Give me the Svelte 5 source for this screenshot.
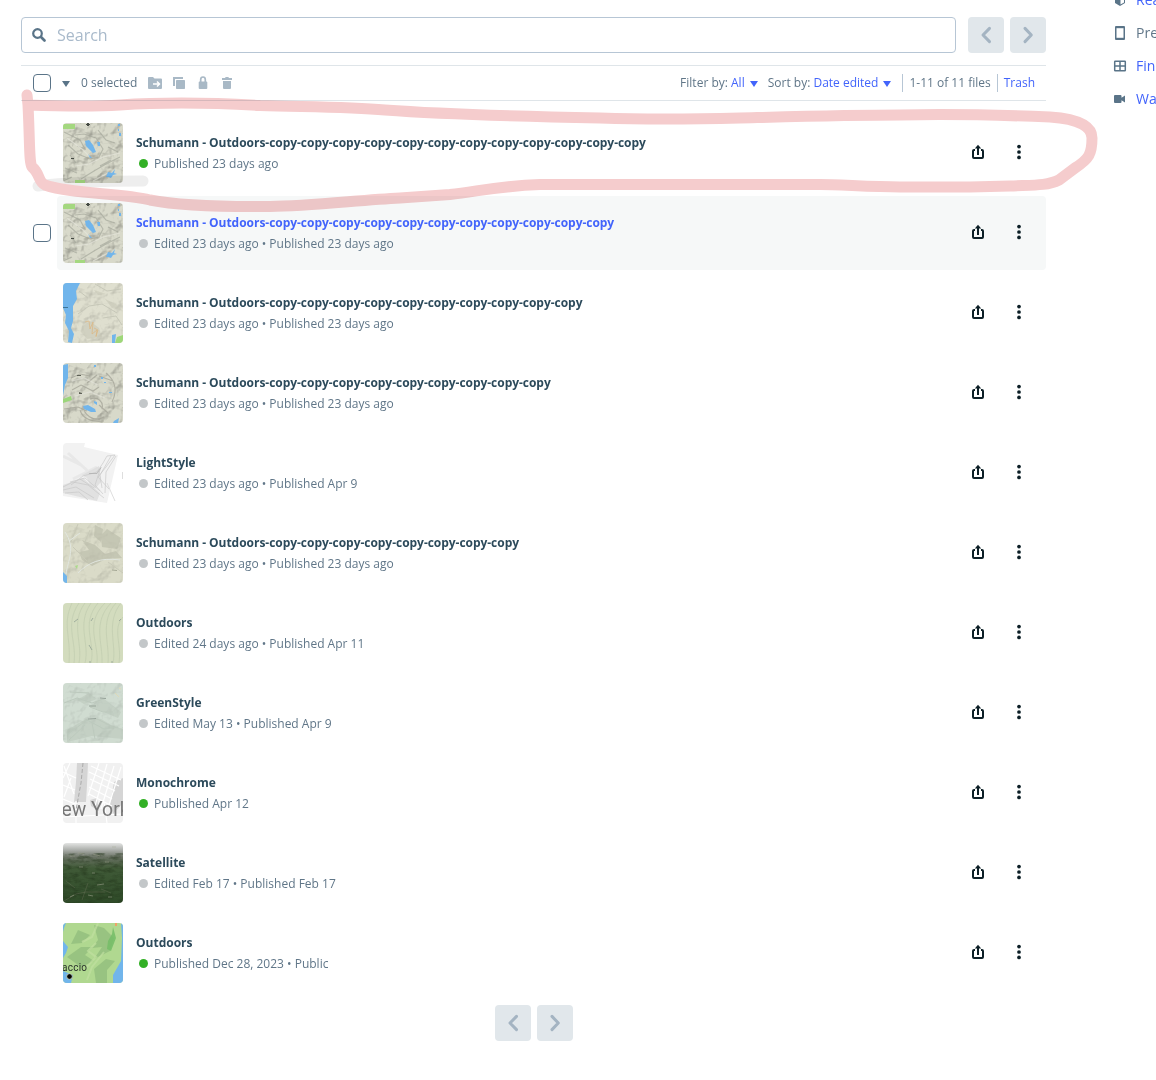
<script>
  const copies = (n) => 'Schumann - Outdoors' + '-copy'.repeat(n);
  const files = [
    { title: copies(12), meta: 'Published 23 days ago', live: true, thumb: 'lakes' },
    { title: copies(11), meta: 'Edited 23 days ago • Published 23 days ago', thumb: 'lakes', hover: true },
    { title: copies(10), meta: 'Edited 23 days ago • Published 23 days ago', thumb: 'coast' },
    { title: copies(9), meta: 'Edited 23 days ago • Published 23 days ago', thumb: 'hills' },
    { title: 'LightStyle', meta: 'Edited 23 days ago • Published Apr 9', thumb: 'light' },
    { title: copies(8), meta: 'Edited 23 days ago • Published 23 days ago', thumb: 'plain' },
    { title: 'Outdoors', meta: 'Edited 24 days ago • Published Apr 11', thumb: 'contour' },
    { title: 'GreenStyle', meta: 'Edited May 13 • Published Apr 9', thumb: 'green' },
    { title: 'Monochrome', meta: 'Published Apr 12', live: true, thumb: 'mono' },
    { title: 'Satellite', meta: 'Edited Feb 17 • Published Feb 17', thumb: 'sat' },
    { title: 'Outdoors', meta: 'Published Dec 28, 2023 • Public', live: true, thumb: 'island' }
  ];
</script>

{#snippet chevron(dir)}
  <button class="nav" aria-label={dir}>
    <svg width="18" height="18" viewBox="0 0 18 18" fill="none" stroke="#a4b4c2" stroke-width="3" stroke-linecap="round" stroke-linejoin="round">
      {#if dir === 'previous'}<path d="M12.500 2.400 6 9l6.500 6.600" />{:else}<path d="M6 2.400 12.300 9 6 15.600" />{/if}
    </svg>
  </button>
{/snippet}

{#snippet thumb(kind)}
  <svg class="thumb" width="60" height="60" viewBox="0 0 60 60" fill="none">
    <defs>
      <linearGradient id="sky" x2="0" y2="1">
        <stop offset="0" stop-color="#e3e4e3" /><stop offset=".12" stop-color="#a9aca8" /><stop offset=".24" stop-color="#687062" /><stop offset=".42" stop-color="#405a37" /><stop offset="1" stop-color="#2e4a28" />
      </linearGradient>
      <filter id="relief" x="0" y="0" width="1" height="1" color-interpolation-filters="sRGB">
        <feTurbulence type="fractalNoise" baseFrequency=".075" numOctaves="4" seed="8" result="n" />
        <feDiffuseLighting in="n" surfaceScale="5" diffuseConstant="1.150" lighting-color="#fff"><feDistantLight azimuth="225" elevation="60" /></feDiffuseLighting>
      </filter>
      <filter id="grain" x="0" y="0" width="1" height="1" color-interpolation-filters="sRGB">
        <feTurbulence type="fractalNoise" baseFrequency=".12 .3" numOctaves="3" seed="4" />
        <feColorMatrix values="0 0 0 0 .13  0 0 0 0 .2  0 0 0 0 .1  2.500 0 0 0 -1" />
      </filter>
    </defs>
    {#if kind === 'lakes'}
      <path fill="#d8d9ca" d="M0 0h60v60H0z" />
      <path class="relief" filter="url(#relief)" fill="#fff" opacity=".36" d="M0 0h60v60H0z" />
      <path stroke="#a2a498" stroke-width="1.100" opacity=".65" d="M1 9l8 4 8 4 5 9-8-3M5 22l10 9 12 5 9-2 4-8-7-11-12-4-9 1M35 7l8 10 9 3M18 56l13-8 12-7 14-7M2 45l12 5M0 58l9-4M37 43l11-6M7 32l6 8M45 24l10 5" />
      <path stroke="#e6e6dc" stroke-width="1.200" opacity=".7" d="M4 15l15 11 8 8 M12 43l14-2 14-7 17-4M30 58l15-8" />
      <path fill="#a4d880" d="M0 1h12v5H0zM12 57h10v3H12z" />
      <path fill="#71b5eb" d="M22 18l4-1 4 5 3 7-3 1-7-7zM34 19l3 0v4l-2 0zM25 31l4 4-2 0zM45 49l4 1 3-4-1 4 3 1-4 1-2 3-3-1-2 0zM55 1h2v2h-2zM56 10h2v3h-2zM55 6h1v2h-1z" />
      <path fill="#444942" d="M24 0h2v3h-2zM23 1h4v1h-4zM8 35h3v1H8z" />
    {:else if kind === 'coast'}
      <path fill="#dfdfcf" d="M0 0h60v60H0z" />
      <path class="relief" filter="url(#relief)" opacity=".2" fill="#fff" d="M0 0h60v60H0z" />
      <path fill="#c8c8b8" opacity=".6" d="M20 43l7-5 9 7 3 9-15 2-6-7zM42 16l11 5 7 7-11-3zM31 7l12 4-8 1z" />
      <path stroke="#c6c7b8" d="M15 31l11-8 13-2 15 9M32 1l12 7 14-2M40 35l13-2 6 9M16 8l9 7" />
      <path stroke="#dcb680" stroke-width=".7" d="M22 39l4-1 1 8 3-7-1 12 5-4-1 7M31 45l4 2-2 6" />
      <path fill="#71b5eb" d="M0 0h17l-4 8 1 8-4 7 0 15-2 7 3 6-2 9-4-1 1-11-4-8 1-8-3-7zM49 52l4-1-1 9h-3z" />
      <path fill="#9ed879" d="M54 54l6-2v8h-8z" /><path stroke="#3d7599" d="M0 24.500h5" />
    {:else if kind === 'hills'}
      <path fill="#d8d9ca" d="M0 0h60v60H0z" />
      <path class="relief" filter="url(#relief)" opacity=".34" fill="#fff" d="M0 0h60v60H0z" />
      <path stroke="#a3a397" stroke-width="1.100" opacity=".75" d="M8 15l9-4 10 2M9 27l9-5 12 6 6-4M21 43c-1 8 9 17 20 11M17 47c2 8 12 13 24 11M36 42l9 8M43 10c9 7 12 18 6 29M36 13l14 5M1 46l14-2 9 4M24 20l10-8M27 36c8-3 14 3 12 10" />
      <path stroke="#e5e5dc" stroke-width="1.200" opacity=".6" d="M9 18l12-3 14 7M12 33l15-4 15 6" />
      <path fill="#71b5eb" d="M0 2l5-1v14l-3 7-2 11zM20 43l5-1 7 4 1 3-5 0-7-3zM31 38l3 1v3l-3-2zM38 14h2v2h-2zM46 29h3v1h-3zM41 19h2v1h-2zM51 58l5-3-1 5h-5zM31 2h2v2h-2z" />
      <path fill="#9bd67a" d="M0 36l8-3 1 4-9 3z" /><path fill="#5d6055" d="M14 12h4v1h-4zM16 29l3 1v1h-3z" />
    {:else if kind === 'light'}
      <path fill="#f2f2f2" d="M0 0h22l-1 4 34 8-11 48L0 53z" />
      <path stroke="#e8e8e8" stroke-width="3" d="M0 13l18 9M10 36l24-12M5 10l23 21" />
      <path fill="#dcdcdc" d="M19 32l17-9 2 16-8 9-6-13zM0 42l20-7 17 15-3 8L0 50z" opacity=".8" />
      <path stroke="#c4c4c4" stroke-width=".6" d="M8 42l12-9 14-4 6-9 4-7 8-1-9 12-8 10 11 12M38 24l-6 18 8 9M48 13L37 32l2 13M53 13L43 29l-1 21M0 47l13-3 18 11M0 44l10-5 15 3 16 13M2 50l14-1 9 8M7 39l15-4 15 13M17 36l14 9" />
      <path stroke="#aaa" stroke-width=".7" d="M26 30.500h8l4-6" /><path stroke="#dedede" d="M44 40l8 18M59.500 29v7" />
    {:else if kind === 'plain'}
      <path fill="#dadbc8" d="M0 0h60v60H0z" /><path class="relief" filter="url(#relief)" opacity=".15" fill="#fff" d="M0 0h60v60H0z" />
      <path fill="#b8b9a7" opacity=".6" d="M38 12l6-6 14 9-4 11-15-2zM16 29l10-2-7-10 13 5 10 9 11-3 6 7-16 1-14 7-10-6zM32 2l8 4-2 13-7-6z" />
      <path stroke="#c8c9b7" d="M15 1l-7 18M27 7l-6 14M10 24l14 14M45 39l15 11" /><path stroke="#e1e6df" d="M2 9c11 16 3 28 1 42M17 10l-11 8M15 50c10-10 22-16 42-13" />
      <path fill="#71b5eb" d="M0 49l4 4v7H0z" /><path fill="#aada8a" d="M12 43l3-1-1 4z" /><path stroke="#969987" stroke-width=".8" d="M49 47l5 .5" />
    {:else if kind === 'contour'}
      <path fill="#d3dcbe" d="M0 0h60v60H0z" />
      <path stroke="#bec9ad" stroke-width=".6" d="M9 0C-1 22 8 32 6 60M16 0C1 22 14 38 11 60M22 0C7 20 20 40 16 60M28 0C13 22 27 40 22 60M35 0C17 22 33 40 28 60M42 0C21 21 36 40 34 60M48 0C29 20 40 40 39 60M53 0C36 19 47 41 45 60M58 0C42 20 54 42 50 60M60 14C49 26 59 41 56 60" />
      <path stroke="#98a799" stroke-width=".9" d="M11 19l4-3M28 18l2-3M26 42l3 5M56 18l2-2M27 58v2M49 58v2" />
    {:else if kind === 'green'}
      <path fill="#d0dcd1" d="M0 0h60v60H0z" /><path class="relief" filter="url(#relief)" opacity=".13" fill="#fff" d="M0 0h60v60H0z" />
      <path fill="#b1beb2" opacity=".4" d="M4 47l19-11 15 0 10 6 12 4v10L29 53 4 59zM26 23l14-8 18 14-3 6zM14 17l12-7 8 6-13 5z" />
      <path stroke="#bcc9bd" d="M1 20l13-5 15 5 14-5M5 51l19-14 17 9 14-2M27 24l13 5 10 0M32 35l18 9M7 9l19 1M6 57l16-15M29 40l3 16" /><path stroke="#8d9990" stroke-width=".8" d="M26 23h7M37 15l6 .5M25 36l8-.5" /><path stroke="#ded9b6" d="M52 10l4 4M56 5l2 1" />
    {:else if kind === 'mono'}
      <path fill="#f1f1f1" d="M0 0h60v60H0z" /><path fill="#d5d5d5" d="M14 0h11l-1 22-1 17H11l2-20zM51 19l9-4v25l-10 11-3-9zM27 37l7-2 2 13-8-5z" />
      <path stroke="#fff" stroke-width="1.200" d="M28 3l30 14M26 9l30 14M27 16l25 12M26 24l23 12M26 31l23 12M36 0L25 33M44 1L32 43M51 3L38 46M58 4L46 42M0 9l13 6M1 3l10 28M0 22l12 5M7 0L0 15M0 36l12 5M8 15L1 34M0 54l60-3M13 38v22M41 39l3 21" />
      <path stroke="#aaa" d="M20 0l-2 20-5 27" stroke-dasharray="4 2" />
      <text x="-1.500" y="53" class="nyc" textLength="68" lengthAdjust="spacingAndGlyphs">ew York</text>
    {:else if kind === 'sat'}
      <path fill="url(#sky)" d="M0 0h60v60H0z" /><path filter="url(#grain)" opacity=".5" fill="#fff" d="M0 10h60v50H0z" />
      <path stroke="#6b7058" stroke-width=".7" opacity=".6" d="M1 58l12-7 10-2 19 0M25 40l-6 17M3 38l9 7M38 46l10 4" /><path stroke="#a9aa96" stroke-width=".8" opacity=".65" d="M15 10l6 1M30 11l7 2M7 13l5 0M34 42l7-1M25 52l5 1M16 24h4M29 30h3M45 54l4 0M7 54l4-2M49 4h4M42 19h4" />
    {:else}
      <path fill="#b0d890" d="M0 0h60v60H0z" />
      <path fill="#8fbb7a" opacity=".7" d="M31 2l10 3 10 10-4 13-16 8 8-12-10 1 6-8zM4 34l14-10 12 0-8 8 9 6-13 6zM31 46l12-10 9 2-8 9 0 13H33zM15 7l12 5-8 8-11 1z" />
      <path fill="#74bd67" opacity=".85" d="M50 4l3 11-5 13-4-2 1-8 4-7z" /><path stroke="#c1dfa0" stroke-width="2" opacity=".7" d="M33 20l-8 8 8 6-10 11M41 29L29 44l-5 13M35 0l-6 14-10 5" />
      <path fill="#71b5eb" d="M0 0h3L1 5l-1 4zM0 18l5 6-2 6-3 5zM0 48l10 4-2 8H0zM58 0h2v60H50l0-8 8-14 1-23z" /><path fill="#efa267" d="M52 0h2v3h-2z" />
      <text x="-1" y="48" class="town" textLength="25">accio</text><circle cx="6.500" cy="53.500" r="2.800" fill="#050505" stroke="#d6e0c2" stroke-width=".8" />
    {/if}
  </svg>
{/snippet}

<main>
  <section class="files">
    <div class="search-row">
      <div class="search">
        <svg width="14" height="14" viewBox="0 0 14 14" fill="none" stroke="#5a7488"><circle cx="5.500" cy="5.500" r="4.300" stroke-width="2.200" /><path d="M9 9l3.500 3.500" stroke-width="2.600" stroke-linecap="round" /></svg>
        <span>Search</span>
      </div>
      <div class="pager">{@render chevron('previous')}{@render chevron('next')}</div>
    </div>

    <div class="toolbar">
      <span class="box"></span>
      <i class="caret dark"></i>
      <span class="selected">0 selected</span>
      <div class="tools">
        <svg width="16" height="14" viewBox="0 0 16 14"><path fill="#a9b9c6" d="M2 1h4l1.500 1.500H14a1 1 0 0 1 1 1V12a1 1 0 0 1-1 1H2a1 1 0 0 1-1-1V2a1 1 0 0 1 1-1z" /><path d="M6 8h6M10 5.500L12.500 8 10 10.500" fill="none" stroke="#fff" stroke-width="1.500" /></svg>
        <svg width="14" height="14" viewBox="0 0 14 14" fill="#a9b9c6"><path d="M1 1h10v2H3v7H1z" /><rect x="4" y="4" width="9" height="9" rx=".7" /></svg>
        <svg width="14" height="14" viewBox="0 0 14 14"><rect x="2.700" y="5.500" width="8.600" height="7.500" rx="1" fill="#a9b9c6" /><path d="M4.700 7V3.500a2.300 2.500 0 0 1 4.600 0V7" fill="none" stroke="#a9b9c6" stroke-width="1.700" /></svg>
        <svg width="14" height="14" viewBox="0 0 14 14" fill="#a9b9c6"><path d="M2 2h3l.7-1h2.600L9 2h3v2H2zM3 5h8v7a1 1 0 0 1-1 1H4a1 1 0 0 1-1-1z" /></svg>
      </div>
      <div class="filters">
        <span>Filter by: <a>All</a></span><i class="caret"></i>
        <span class="sort">Sort by: <a>Date edited</a></span><i class="caret"></i>
        <span class="count">1-11 of 11 files</span>
        <a class="trash">Trash</a>
      </div>
    </div>

    <div class="list">
      {#each files as f}
        <div class="row">
          <div class="check">{#if f.hover}<span class="box"></span>{/if}</div>
          <div class="card" class:hover={f.hover}>
            {@render thumb(f.thumb)}
            <div class="info">
              <div class="title" class:long={f.title.length > 20}>{f.title}</div>
              <div class="meta"><i class="dot" class:live={f.live}></i>{f.meta}</div>
            </div>
            <svg class="share" width="14" height="16" viewBox="0 0 14 16" fill="none" stroke="#0c1f26" stroke-width="2"><path d="M4 6H3Q2 6 2 7v6q0 1 1 1h8q1 0 1-1V7q0-1-1-1h-1M7 11V3" /><path d="M3.800 4.500 7 .8l3.200 3.700z" fill="#0c1f26" stroke="none" /></svg>
            <svg class="more" width="6" height="16" viewBox="0 0 6 16" fill="#0c1f26"><circle cx="3" cy="2.600" r="1.850" /><circle cx="3" cy="8" r="1.850" /><circle cx="3" cy="13.400" r="1.850" /></svg>
          </div>
        </div>
      {/each}
    </div>
    <div class="pager bottom">{@render chevron('previous')}{@render chevron('next')}</div>
  </section>

  <aside>
    <div class="side"><svg width="14" height="14" viewBox="0 0 14 14"><path d="M2 3l5-2 5 2v7l-5 3-5-3z" fill="#5a7488" /><path d="M7.500 5.500L11 4v5.500l-3.500 2z" fill="#fff" /></svg><a>Read</a></div>
    <div class="side"><svg width="14" height="14" viewBox="0 0 14 14"><rect x="2" y="0" width="10" height="14" rx="1" fill="#5a7488" /><path d="M3.500 2.200h7v9.600h-7z" fill="#fff" /></svg><span>Preview</span></div>
    <div class="side"><svg width="14" height="14" viewBox="0 0 14 14"><rect x="1.700" y="2.200" width="10.600" height="9.600" rx=".5" fill="none" stroke="#5a7488" stroke-width="1.500" /><path d="M7 2v10M2 7h10" stroke="#5a7488" stroke-width="1.500" /></svg><a>Find</a></div>
    <div class="side"><svg width="14" height="14" viewBox="0 0 14 14" fill="#5a7488"><path d="M2 3h5.500a1 1 0 0 1 1 1v1.700L12 3.500v7L8.500 8.300V10a1 1 0 0 1-1 1H2a1 1 0 0 1-1-1V4a1 1 0 0 1 1-1z" /></svg><a>Watch</a></div>
  </aside>

  <svg class="marker" width="1156" height="230" viewBox="0 0 1156 230" fill="none" stroke-width="11" stroke-linecap="round" stroke-linejoin="round">
    <path stroke="#eee" d="M38 186C60 183 100 181 143 181" />
    <path stroke="#f5cccd" d="M27 95L28 105C55 106 90 107 120 105S200 102 260 105.500C310 107 350 107 385 110C440 114 550 117 600 118C660 120 700 119 740 118C780 117 850 115 900 115C950 114 1000 115 1050 117C1080 119 1092 127 1092 138C1092 154 1089 159 1075 168L1059 180C1047 186 1032 185 1010 186L970 187H900C870 187 840 184.500 820 184.500H540C500 186 480 191 450 194.500L400 198C360 200 310 206 270 206.500C220 207 180 206 150 200C120 193 70 194 45 185C38 182 40 173 32 167C29 162 30 145 28 105" />
  </svg>
</main>

<style>
  :global(body) { margin: 0; background: #fff; }
  main { position: relative; display: flex; width: 1156px; height: 1080px; overflow: hidden; font: 12px/18px 'Open Sans', sans-serif; color: #607688; background: #fff; }
  svg { display: block; flex: none; }
  a { color: #4264fb; }
  .files { width: 1025px; margin-left: 21px; padding-top: 17px; flex: none; }
  .search-row { display: flex; gap: 12px; height: 36px; }
  .search { display: flex; flex: 1; align-items: center; gap: 11px; padding-left: 10px; border: 1px solid #b7c6d5; border-radius: 4px; font-size: 16px; line-height: 24px; color: #a9bacb; }
  .pager { display: flex; gap: 6px; }
  .nav { display: grid; place-items: center; width: 36px; height: 36px; padding: 0; border: 0; border-radius: 4px; background: #e1e7eb; }
  .toolbar { display: flex; align-items: center; box-sizing: border-box; height: 36px; margin-top: 12px; padding: 0 11px 0 12px; border: solid #dfe5e9; border-width: 1px 0; }
  .box { display: block; box-sizing: border-box; width: 18px; height: 18px; border: 1px solid #5a7488; border-radius: 4px; background: #fff; }
  .caret { width: 0; height: 0; border: 4px solid transparent; border-top: 6px solid #4264fb; border-bottom: 0; margin-left: 5px; margin-top: 2px; }
  .caret.dark { border-top-color: #5a7488; margin-left: 11px; }
  .selected { margin-left: 11px; }
  .tools { display: flex; align-items: center; gap: 10px; margin-left: 10px; }
  .tools svg:first-child { margin-right: -1px; }
  .filters { display: flex; align-items: center; margin-left: auto; }
  .sort { margin-left: 10px; }
  .count { margin-left: 11px; padding: 0 6px; border: solid #b7c6d5; border-width: 0 1px; }
  .trash { margin-left: 6px; }
  .list { display: flex; flex-direction: column; gap: 6px; margin-top: 15px; }
  .row { display: flex; height: 74px; }
  .check { display: flex; align-items: center; width: 24px; padding-left: 12px; }
  .card { display: flex; flex: 1; align-items: center; padding: 0 24px 0 6px; border-radius: 4px; }
  .card.hover { background: #f6f8f8; }
  .thumb { border-radius: 4px; overflow: hidden; }
  .relief { mix-blend-mode: multiply; }
  .info { flex: 1; margin: 1px 0 0 13px; white-space: nowrap; }
  .title { font-weight: 700; line-height: 20px; color: #2c4a5b; }
  .title.long { letter-spacing: -0.034px; }
  .hover .title { color: #4264fb; }
  .meta { display: flex; align-items: center; line-height: 22px; }
  .dot { width: 9px; height: 9px; margin: 0 6px 0 3px; border-radius: 50%; background: #c3c7c9; }
  .dot.live { background: #33b026; }
  .share { margin-right: 31px; margin-top: -3px; }
  .more { margin-top: -3px; }
  .bottom { justify-content: center; margin-top: 15px; }
  aside { display: flex; flex-direction: column; margin: -17px 0 0 67px; font-size: 14px; line-height: 33px; }
  .side { display: flex; align-items: center; gap: 9px; height: 33px; white-space: nowrap; }
  .marker { position: absolute; inset: 0 auto auto 0; mix-blend-mode: multiply; pointer-events: none; }
  .nyc { font: 20px Roboto, sans-serif; fill: #777; }
  .town { font: 10px Roboto, sans-serif; fill: #27302a; }
</style>
